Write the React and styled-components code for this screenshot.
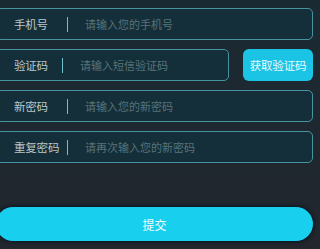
import React from "react";
import styled, { createGlobalStyle } from "styled-components";

const GlobalStyle = createGlobalStyle`
  html, body {
    margin: 0;
    padding: 0;
    height: 100%;
    background: #1f262d;
  }
  #root {
    height: 100%;
  }
  * {
    box-sizing: border-box;
  }
`;

const Page = styled.div`
  width: 320px;
  height: 249px;
  overflow: hidden;
  padding: 8px 7px 0 0;
  background: linear-gradient(180deg, #1a2a33 0%, #1e2830 45%, #23272d 100%);
  font-family: "Noto Sans CJK SC", "Liberation Sans", sans-serif;
`;

const Form = styled.div`
  margin-left: -4px;
  display: flex;
  flex-direction: column;
  gap: 9px;
`;

const Row = styled.div`
  display: flex;
  gap: 14px;
  height: 32px;
`;

const Field = styled.div`
  flex: 1;
  display: flex;
  align-items: center;
  height: 32px;
  padding-left: 17px;
  background: #142f39;
  border: 1px solid #4694a0;
  border-radius: 5px;
`;

const Label = styled.span`
  width: ${(p) => p.$w}px;
  flex: none;
  font-size: 11.5px;
  color: #bcc7cb;
  letter-spacing: -0.2px;
`;

const Divider = styled.span`
  width: 1px;
  height: 15px;
  background: #6cc3cf;
  flex: none;
`;

const Input = styled.input`
  flex: 1;
  min-width: 0;
  margin-left: 15px;
  background: transparent;
  border: none;
  outline: none;
  font-family: inherit;
  font-size: 11px;
  color: #d0d8da;
  &::placeholder {
    color: #58737a;
  }
`;

const CodeButton = styled.button`
  width: 70px;
  height: 32px;
  flex: none;
  border: none;
  border-radius: 6px;
  background: #1bc3e4;
  color: #eafaff;
  font-family: inherit;
  font-size: 11.5px;
  padding: 0;
  letter-spacing: -0.2px;
`;

const Submit = styled.button`
  display: block;
  margin: 44px 0 0 -4px;
  width: 317px;
  height: 34px;
  border: none;
  border-radius: 17px;
  background: #18d0ee;
  color: #f0fbff;
  font-family: inherit;
  font-size: 12px;
  box-shadow: 0 0 4px 1px rgba(5, 20, 35, 0.9);
`;

const fields = [
  { label: "手机号", w: 53, ph: "请输入您的手机号" },
  { label: "验证码", w: 48, ph: "请输入短信验证码", code: true },
  { label: "新密码", w: 53, ph: "请输入您的新密码" },
  { label: "重复密码", w: 53, ph: "请再次输入您的新密码" },
];

export default function App() {
  return (
    <Page>
      <GlobalStyle />
      <Form>
        {fields.map((f) => (
          <Row key={f.label}>
            <Field>
              <Label $w={f.w}>{f.label}</Label>
              <Divider />
              <Input placeholder={f.ph} />
            </Field>
            {f.code && <CodeButton>获取验证码</CodeButton>}
          </Row>
        ))}
      </Form>
      <Submit>提交</Submit>
    </Page>
  );
}
